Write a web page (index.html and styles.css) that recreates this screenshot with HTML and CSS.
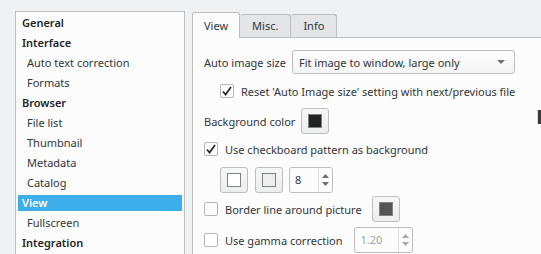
FILE: index.html
```html
<!DOCTYPE html>
<html lang="en">

<head>
    <meta charset="UTF-8">
    <meta name="viewport" content="width=device-width, initial-scale=1.0">
    <title>Preferences</title>
    <link rel="stylesheet" href="styles.css">
</head>

<body>
    <div class="window">
        <ul class="sidebar">
            <li class="group">General</li>
            <li class="group">Interface</li>
            <li class="child">Auto text correction</li>
            <li class="child">Formats</li>
            <li class="group">Browser</li>
            <li class="child">File list</li>
            <li class="child">Thumbnail</li>
            <li class="child">Metadata</li>
            <li class="child">Catalog</li>
            <li class="group selected">View</li>
            <li class="child">Fullscreen</li>
            <li class="group">Integration</li>
        </ul>

        <div class="main">
            <div class="tabs">
                <div class="tab active">View</div>
                <div class="tab">Misc.</div>
                <div class="tab">Info</div>
            </div>

            <div class="panel">
                <div class="row row-combo">
                    <span class="label">Auto image size</span>
                    <div class="combo">
                        <span>Fit image to window, large only</span>
                        <span class="arrow"></span>
                    </div>
                </div>

                <div class="row row-check indent">
                    <span class="check checked">
                        <svg width="12" height="12" viewBox="0 0 12 12"><path d="M2 6.5 L4.6 9.6 L10 2" fill="none" stroke="#232627" stroke-width="1.7"/></svg>
                    </span>
                    <span>Reset 'Auto Image size' setting with next/previous file</span>
                </div>

                <div class="row row-color">
                    <span class="label">Background color</span>
                    <button class="color-btn"><span class="swatch dark"></span></button>
                </div>

                <div class="row row-check2">
                    <span class="check checked">
                        <svg width="12" height="12" viewBox="0 0 12 12"><path d="M2 6.5 L4.6 9.6 L10 2" fill="none" stroke="#232627" stroke-width="1.7"/></svg>
                    </span>
                    <span>Use checkboard pattern as background</span>
                </div>

                <div class="row row-pattern indent">
                    <button class="color-btn"><span class="swatch white"></span></button>
                    <button class="color-btn"><span class="swatch light"></span></button>
                    <div class="spin small">
                        <span class="spin-value">8</span>
                        <span class="spin-arrows">
                            <svg width="9" height="18" viewBox="0 0 9 18"><path d="M1 7 L4.5 3 L8 7 Z M1 11 L4.5 15 L8 11 Z" fill="#6e7073"/></svg>
                        </span>
                    </div>
                </div>

                <div class="row row-border">
                    <span class="check"></span>
                    <span>Border line around picture</span>
                    <button class="color-btn border-btn"><span class="swatch grey"></span></button>
                </div>

                <div class="row row-gamma">
                    <span class="check"></span>
                    <span>Use gamma correction</span>
                    <div class="spin disabled">
                        <span class="spin-value">1.20</span>
                        <span class="spin-arrows">
                            <svg width="9" height="18" viewBox="0 0 9 18"><path d="M1 7 L4.5 3 L8 7 Z M1 11 L4.5 15 L8 11 Z" fill="#a8aaac"/></svg>
                        </span>
                    </div>
                </div>
            </div>
        </div>
    </div>

    <div class="cursor"></div>
</body>

</html>
```

FILE: styles.css
```css
body {
    margin: 0;
    background-color: #eff0f1;
    font-family: "Noto Sans", sans-serif;
    font-size: 11px;
    color: #31363b;
    overflow: hidden;
    height: 254px;
}

.window {
    display: flex;
    padding: 11px 0 0 15px;
    height: 243px;
}

.sidebar {
    flex: none;
    list-style: none;
    margin: 0;
    padding: 1px 2px;
    width: 164px;
    background-color: #fcfcfc;
    border: 1px solid #bcbebf;
    border-bottom: none;
}

.sidebar li {
    height: 20px;
    line-height: 20px;
    white-space: nowrap;
}

.group {
    font-weight: 600;
    padding-left: 4px;
    color: #232627;
}

.child {
    padding-left: 9px;
}

.sidebar .selected {
    box-sizing: border-box;
    line-height: 16px;
    border-top: 2px solid transparent;
    border-bottom: 2px solid transparent;
    background-color: #3daee9;
    background-clip: padding-box;
    color: #fcfcfc;
}

.main {
    flex: 1;
    min-width: 0;
    margin-left: 7px;
    display: flex;
    flex-direction: column;
}

.tabs {
    display: flex;
    height: 26px;
    align-items: flex-end;
}

.tab {
    height: 22px;
    line-height: 22px;
    padding: 0 12px;
    background-color: #e3e5e7;
    border: 1px solid #bcbebf;
    border-bottom: none;
    border-left: none;
    border-radius: 3px 3px 0 0;
}

.tab.active {
    height: 25px;
    line-height: 25px;
    padding: 0 11px;
    background-color: #fcfcfc;
    border-left: 1px solid #bcbebf;
    margin-bottom: -1px;
    position: relative;
}

.panel {
    flex: 1;
    background-color: #fcfcfc;
    border: 1px solid #bcbebf;
    border-right: none;
    border-bottom: none;
    padding: 12px 0 0 11px;
}

.row {
    display: flex;
    align-items: center;
    white-space: nowrap;
}

.indent {
    padding-left: 16px;
}

.row-combo {
    height: 24px;
}

.label {
    margin-right: 6px;
}

.combo {
    width: 207px;
    height: 22px;
    border: 1px solid #bcbebf;
    border-radius: 3px;
    background: linear-gradient(#fcfcfc, #f4f5f5);
    display: flex;
    align-items: center;
    justify-content: space-between;
    padding: 0 8px 0 6px;
}

.arrow {
    width: 0;
    height: 0;
    border-left: 4px solid transparent;
    border-right: 4px solid transparent;
    border-top: 4px solid #6e7073;
    margin-right: 1px;
}

.check {
    width: 12px;
    height: 12px;
    border: 1px solid #b4b6b8;
    border-radius: 2px;
    background-color: #fcfcfc;
    margin-right: 7px;
    display: flex;
    align-items: center;
    justify-content: center;
    flex: none;
}

.row-check {
    height: 20px;
    margin-top: 7px;
}

.row-color {
    height: 26px;
    margin-top: 7px;
}

.row-check2 {
    height: 20px;
    margin-top: 5px;
}

.row-pattern {
    height: 26px;
    margin-top: 8px;
    gap: 7px;
}

.row-border {
    height: 26px;
    margin-top: 3px;
}

.row-gamma {
    height: 24px;
    margin-top: 6px;
}

.color-btn {
    width: 28px;
    height: 26px;
    padding: 0;
    border: 1px solid #bcbebf;
    border-radius: 3px;
    background: linear-gradient(#f6f7f7, #eceded);
    display: flex;
    align-items: center;
    justify-content: center;
}

.row-color .color-btn {
    margin-left: 0;
}

.border-btn {
    margin-left: 10px;
}

.swatch {
    width: 12px;
    height: 12px;
    border: 1px solid #7f8183;
}

.swatch.dark {
    background-color: #232323;
}

.swatch.white {
    background-color: #ffffff;
}

.swatch.light {
    background-color: #eeeeee;
}

.swatch.grey {
    background-color: #555555;
}

.spin {
    height: 24px;
    border: 1px solid #bcbebf;
    border-radius: 3px;
    background-color: #fcfcfc;
    display: flex;
    align-items: stretch;
}

.spin.small {
    width: 42px;
    margin-left: -1px;
}

.spin.disabled {
    width: 57px;
    margin-left: 12px;
    color: #a0a2a4;
}

.spin-value {
    flex: 1;
    line-height: 24px;
    padding-left: 5px;
}

.spin-arrows {
    width: 13px;
    border-left: 1px solid #dcdedf;
    display: flex;
    align-items: center;
    justify-content: center;
}

.cursor {
    position: absolute;
    left: 537px;
    top: 110px;
    width: 4px;
    height: 14px;
    background-color: #3a3a3a;
    border-left: 1px solid #d8d8d8;
}
```
